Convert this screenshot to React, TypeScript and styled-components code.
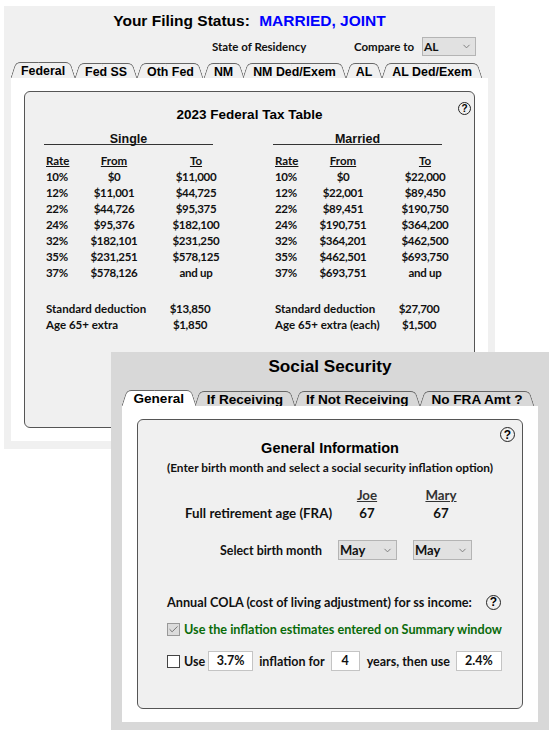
import { Fragment, ReactElement } from "react";
import styled, { createGlobalStyle } from "styled-components";
import { ChevronDown, Check } from "lucide-react";

const GlobalStyle = createGlobalStyle`
  html, body {
    margin: 0;
    background: #fff;
  }
  body {
    font-family: "Lato", "Liberation Sans", sans-serif;
    font-weight: 700;
    font-size: 11.5px;
    color: #111;
  }
`;

const Desktop = styled.div`
  position: relative;
  width: 557px;
  height: 736px;
  overflow: hidden;
`;

const TaxWindow = styled.section`
  position: absolute;
  z-index: 1;
  left: 4px;
  top: 6px;
  width: 491px;
  height: 443px;
  box-sizing: border-box;
  background: #f0f0f0;
  padding: 0 7px;
`;

const SocialWindow = styled.section`
  position: absolute;
  z-index: 2;
  left: 111px;
  top: 352px;
  width: 438px;
  height: 378px;
  box-sizing: border-box;
  background: #d8d8d8;
  padding: 0 11px;
`;

const WindowTitle = styled.h1<{ $size: number; $height: number; $gap: number }>`
  margin: 0 0 ${({ $gap }) => $gap}px;
  height: ${({ $height }) => $height}px;
  text-align: center;
  font: 700 ${({ $size }) => $size}px/${({ $height }) => $height}px "Liberation Sans", sans-serif;
  color: #000;
`;

const Status = styled.span`
  color: #0000ff;
  margin-left: 5px;
`;

const StateRow = styled.div`
  display: flex;
  align-items: center;
  height: 22px;
  margin: -1px 0 5px;
  padding-left: 201px;
`;

const StateLabel = styled.span`
  width: 142px;
`;

const CompareLabel = styled.span`
  width: 68px;
`;

const Dropdown = styled.div<{ $width: number; $height: number; $size: number }>`
  display: flex;
  align-items: center;
  justify-content: space-between;
  box-sizing: border-box;
  width: ${({ $width }) => $width}px;
  height: ${({ $height }) => $height}px;
  padding: 0 3px 0 1px;
  font-size: ${({ $size }) => $size}px;
  background: #e1e1e1;
  border: 1px solid #b4b4b4;
  svg {
    color: #777;
  }
`;

const TabBar = styled.div`
  display: flex;
  height: 16px;
`;

const Tab = styled.div<{ $active?: boolean; $size: number; $pad: number; $fill: string }>`
  position: relative;
  z-index: ${({ $active }) => ($active ? 2 : 1)};
  margin-top: ${({ $active }) => ($active ? 0 : 1)}px;
  padding: 0 ${({ $pad }) => $pad}px;
  height: ${({ $active }) => ($active ? 16 : 15)}px;
  white-space: nowrap;
  font: 700 ${({ $size }) => $size}px/18px "Liberation Sans", sans-serif;
  color: #000;
  isolation: isolate;
  &::before,
  &::after {
    content: "";
    position: absolute;
    top: 0;
    bottom: 0;
    width: 50%;
    z-index: -1;
    background: ${({ $fill }) => $fill};
    border-top: 1px solid #666;
    box-sizing: border-box;
  }
  &::before {
    left: 2px;
    border-left: 1px solid #666;
    border-top-left-radius: 5px;
    transform: skewX(-18deg);
  }
  &::after {
    right: 2px;
    border-right: 1px solid #666;
    border-top-right-radius: 5px;
    transform: skewX(18deg);
  }
`;

const TabPage = styled.div<{ $height: number; $pad: number }>`
  position: relative;
  z-index: 3;
  height: ${({ $height }) => $height}px;
  box-sizing: border-box;
  padding: 13px ${({ $pad }) => $pad}px;
  background: #fff;
`;

const Panel = styled.div<{ $height: number }>`
  position: relative;
  height: ${({ $height }) => $height}px;
  box-sizing: border-box;
  background: #f0f0f0;
  border: 1px solid #555;
  border-radius: 6px;
`;

const Help = styled.span<{ $size: number }>`
  display: flex;
  align-items: center;
  justify-content: center;
  flex: none;
  box-sizing: border-box;
  width: ${({ $size }) => $size}px;
  height: ${({ $size }) => $size}px;
  border: 1.5px solid #222;
  border-radius: 50%;
  font: 700 ${({ $size }) => $size - 3}px/1 "Liberation Sans", sans-serif;
  color: #000;
`;

const CornerHelp = styled(Help)<{ $right: number; $top: number }>`
  position: absolute;
  right: ${({ $right }) => $right}px;
  top: ${({ $top }) => $top}px;
`;

const RowHelp = styled(Help)`
  margin-left: 14px;
`;

const PanelTitle = styled.h2<{ $top: number; $size: number }>`
  margin: ${({ $top }) => $top}px 0 0;
  text-align: center;
  font: 700 ${({ $size }) => $size}px/18px "Liberation Sans", sans-serif;
  color: #000;
`;

const Columns = styled.div`
  display: flex;
  margin-top: 6px;
  padding-left: 19px;
`;

const Column = styled.div`
  flex: none;
  width: 229px;
`;

const StatusHeading = styled.div`
  width: 169px;
  height: 15px;
  box-sizing: border-box;
  padding-top: 5px;
  text-align: center;
  font: 700 12.5px/9px "Liberation Sans", sans-serif;
  border-bottom: 1px solid #333;
  margin-bottom: 8px;
`;

const RateGrid = styled.div`
  display: grid;
  grid-template-columns: 40px 60px 104px;
  grid-auto-rows: 16px;
  line-height: 16px;
`;

const RateHead = styled.span<{ $center?: boolean }>`
  text-decoration: underline;
  text-align: ${({ $center }) => ($center ? "center" : "left")};
  padding-left: ${({ $center }) => ($center ? 0 : 2)}px;
`;

const RateCell = styled.span<{ $center?: boolean }>`
  text-align: ${({ $center }) => ($center ? "center" : "left")};
  padding-left: ${({ $center }) => ($center ? 0 : 2)}px;
  letter-spacing: -0.3px;
`;

const DeductionGrid = styled.div`
  display: grid;
  grid-template-columns: 122px 44px;
  grid-auto-rows: 16px;
  line-height: 16px;
  margin-top: 20px;
  padding-left: 2px;
  white-space: nowrap;
  span:nth-child(even) {
    text-align: center;
    letter-spacing: -0.3px;
  }
`;

const Subtitle = styled.p`
  margin: 3px 0 0;
  font-size: 11.85px;
  line-height: 16px;
  text-align: center;
`;

const PersonRow = styled.div<{ $top: number }>`
  display: grid;
  grid-template-columns: 145px 74px 74px;
  align-items: center;
  height: 18px;
  margin-top: ${({ $top }) => $top}px;
  padding-left: 47px;
  font-size: 13.3px;
  white-space: nowrap;
`;

const PersonName = styled.span`
  text-align: center;
  text-decoration: underline;
  color: #333;
`;

const PersonValue = styled.span`
  text-align: center;
`;

const MonthRow = styled.div`
  display: flex;
  align-items: center;
  height: 20px;
  margin-top: 18px;
  padding-left: 82px;
  gap: 16px;
  font-size: 12.4px;
`;

const MonthLabel = styled.span`
  width: 102px;
  white-space: nowrap;
`;

const LeftRow = styled.div<{ $top: number; $color?: string; $size: number }>`
  display: flex;
  align-items: center;
  height: 20px;
  margin-top: ${({ $top }) => $top}px;
  padding-left: 29px;
  font-size: ${({ $size }) => $size}px;
  color: ${({ $color }) => $color ?? "inherit"};
`;

const CheckBox = styled.span<{ $checked?: boolean }>`
  display: flex;
  align-items: center;
  justify-content: center;
  box-sizing: border-box;
  width: 13px;
  height: 13px;
  margin-right: 4px;
  background: ${({ $checked }) => ($checked ? "#dcdcdc" : "#fff")};
  border: 1px solid ${({ $checked }) => ($checked ? "#999" : "#444")};
  svg {
    color: #444;
  }
`;

const NumberBox = styled.span<{ $width: number; $before: number; $after: number }>`
  box-sizing: border-box;
  width: ${({ $width }) => $width}px;
  height: 20px;
  margin: 0 ${({ $after }) => $after}px 0 ${({ $before }) => $before}px;
  background: #fff;
  border: 1px solid #c4c4c4;
  line-height: 18px;
  text-align: center;
`;

const singleRates = [
  ["10%", "$0", "$11,000"],
  ["12%", "$11,001", "$44,725"],
  ["22%", "$44,726", "$95,375"],
  ["24%", "$95,376", "$182,100"],
  ["32%", "$182,101", "$231,250"],
  ["35%", "$231,251", "$578,125"],
  ["37%", "$578,126", "and up"],
];

const marriedRates = [
  ["10%", "$0", "$22,000"],
  ["12%", "$22,001", "$89,450"],
  ["22%", "$89,451", "$190,750"],
  ["24%", "$190,751", "$364,200"],
  ["32%", "$364,201", "$462,500"],
  ["35%", "$462,501", "$693,750"],
  ["37%", "$693,751", "and up"],
];

const filingColumns = [
  {
    title: "Single",
    rates: singleRates,
    standard: "$13,850",
    extraLabel: "Age 65+ extra",
    extra: "$1,850",
  },
  {
    title: "Married",
    rates: marriedRates,
    standard: "$27,700",
    extraLabel: "Age 65+ extra (each)",
    extra: "$1,500",
  },
];

const taxTabs = ["Federal", "Fed SS", "Oth Fed", "NM", "NM Ded/Exem", "AL", "AL Ded/Exem"];
const socialTabs = ["General", "If Receiving", "If Not Receiving", "No FRA Amt ?"];

const App = (): ReactElement => {
  return (
    <Desktop>
      <GlobalStyle />

      <TaxWindow>
        <WindowTitle $size={15.5} $height={30} $gap={0}>
          Your Filing Status: <Status>MARRIED, JOINT</Status>
        </WindowTitle>
        <StateRow>
          <StateLabel>State of Residency</StateLabel>
          <CompareLabel>Compare to</CompareLabel>
          <Dropdown $width={54} $height={19} $size={12}>
            AL
            <ChevronDown size={11} />
          </Dropdown>
        </StateRow>
        <TabBar>
          {taxTabs.map((tab, i) => (
            <Tab key={tab} $active={i === 0} $size={12.4} $pad={10} $fill="#f0f0f0">
              {tab}
            </Tab>
          ))}
        </TabBar>
        <TabPage $height={363} $pad={13}>
          <Panel $height={337}>
            <CornerHelp $size={13} $right={3} $top={10}>?</CornerHelp>
            <PanelTitle $top={14} $size={13.5}>
              2023 Federal Tax Table
            </PanelTitle>
            <Columns>
              {filingColumns.map((col) => (
                <Column key={col.title}>
                  <StatusHeading>{col.title}</StatusHeading>
                  <RateGrid>
                    <RateHead>Rate</RateHead>
                    <RateHead $center>From</RateHead>
                    <RateHead $center>To</RateHead>
                    {col.rates.map(([rate, from, to]) => (
                      <Fragment key={rate}>
                        <RateCell>{rate}</RateCell>
                        <RateCell $center>{from}</RateCell>
                        <RateCell $center>{to}</RateCell>
                      </Fragment>
                    ))}
                  </RateGrid>
                  <DeductionGrid>
                    <span>Standard deduction</span>
                    <span>{col.standard}</span>
                    <span>{col.extraLabel}</span>
                    <span>{col.extra}</span>
                  </DeductionGrid>
                </Column>
              ))}
            </Columns>
          </Panel>
        </TabPage>
      </TaxWindow>

      <SocialWindow>
        <WindowTitle $size={17.2} $height={28} $gap={10}>
          Social Security
        </WindowTitle>
        <TabBar>
          {socialTabs.map((tab, i) => (
            <Tab key={tab} $active={i === 0} $size={13.6} $pad={11.4} $fill={i === 0 ? "#fff" : "#d8d8d8"}>
              {tab}
            </Tab>
          ))}
        </TabBar>
        <TabPage $height={316} $pad={15}>
          <Panel $height={290}>
            <CornerHelp $size={15} $right={7} $top={7}>?</CornerHelp>
            <PanelTitle $top={19} $size={14.5}>
              General Information
            </PanelTitle>
            <Subtitle>(Enter birth month and select a social security inflation option)</Subtitle>
            <PersonRow $top={10}>
              <span />
              <PersonName>Joe</PersonName>
              <PersonName>Mary</PersonName>
            </PersonRow>
            <PersonRow $top={0}>
              <span>Full retirement age (FRA)</span>
              <PersonValue>67</PersonValue>
              <PersonValue>67</PersonValue>
            </PersonRow>
            <MonthRow>
              <MonthLabel>Select birth month</MonthLabel>
              <Dropdown $width={59} $height={20} $size={13}>
                May
                <ChevronDown size={11} />
              </Dropdown>
              <Dropdown $width={59} $height={20} $size={13}>
                May
                <ChevronDown size={11} />
              </Dropdown>
            </MonthRow>
            <LeftRow $top={32} $size={12.7}>
              Annual COLA (cost of living adjustment) for ss income:
              <RowHelp $size={15}>?</RowHelp>
            </LeftRow>
            <LeftRow $top={7} $color="#0a6b0a" $size={12.65}>
              <CheckBox $checked>
                <Check size={11} strokeWidth={1.5} />
              </CheckBox>
              Use the inflation estimates entered on Summary window
            </LeftRow>
            <LeftRow $top={12} $size={12.5}>
              <CheckBox />
              Use
              <NumberBox $width={45} $before={3} $after={6}>3.7%</NumberBox>
              inflation for
              <NumberBox $width={29} $before={6} $after={7}>4</NumberBox>
              years, then use
              <NumberBox $width={46} $before={6} $after={0}>2.4%</NumberBox>
            </LeftRow>
          </Panel>
        </TabPage>
      </SocialWindow>
    </Desktop>
  );
};

export default App;
